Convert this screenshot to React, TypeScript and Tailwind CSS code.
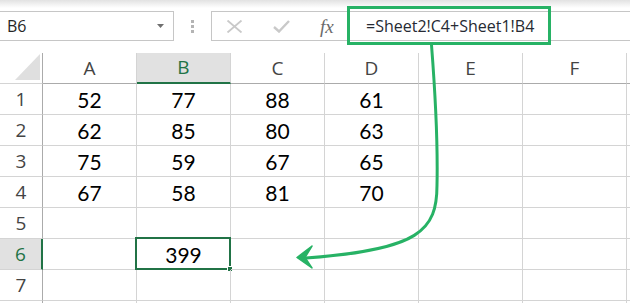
import React from "react";

const cols = [
  { key: "A", w: "w-[94px]" },
  { key: "B", w: "w-[94px]" },
  { key: "C", w: "w-[94px]" },
  { key: "D", w: "w-[94px]" },
  { key: "E", w: "w-[104px]" },
  { key: "F", w: "w-[104px]" },
];

const data: (number | null)[][] = [
  [52, 77, 88, 61],
  [62, 85, 80, 63],
  [75, 59, 67, 65],
  [67, 58, 81, 70],
  [],
  [null, 399],
  [],
];

function FormulaBar() {
  return (
    <div className="flex items-center mt-[3px] h-[30px]">
      <div className="w-[174px] h-full border border-l-0 border-[#c6c6c6] bg-white flex items-center justify-between pl-[7px] pr-[9px]">
        <span className="font-['Open_Sans',sans-serif] text-[16px] text-[#262626] leading-none">
          B6
        </span>
        <svg width="7" height="4" viewBox="0 0 7 4">
          <polygon points="0,0 7,0 3.5,4" fill="#6f6f6f" />
        </svg>
      </div>
      <div className="w-[37px] h-full flex flex-col items-center justify-center gap-[2px]">
        <div className="w-[3px] h-[3px] bg-[#b4b4b4]" />
        <div className="w-[3px] h-[3px] bg-[#b4b4b4]" />
        <div className="w-[3px] h-[3px] bg-[#b4b4b4]" />
      </div>
      <div className="flex-1 h-full border-y border-l border-[#c6c6c6] bg-white flex items-center">
        <div className="w-[135px] flex items-center pl-[14px] gap-[30px]">
          <svg width="17" height="13" viewBox="0 0 17 13">
            <path d="M1.5 0.5 L15.5 12.5 M15.5 0.5 L1.5 12.5" stroke="#c9c9c9" strokeWidth="1.8" fill="none" />
          </svg>
          <svg width="17" height="13" viewBox="0 0 17 13">
            <path d="M1 7 L6 11.5 L16 1" stroke="#c9c9c9" strokeWidth="2.4" fill="none" />
          </svg>
          <span className="font-['Liberation_Serif',serif] italic text-[19px] text-[#6a6a6a] leading-none">
            fx
          </span>
        </div>
        <span className="ml-[19px] font-['Open_Sans',sans-serif] text-[16px] text-[#262a33] leading-none">
          =Sheet2!C4+Sheet1!B4
        </span>
      </div>
    </div>
  );
}

function HeaderRow() {
  return (
    <div className="flex h-[31px]">
      <div className="w-[43px] h-full border-r border-b border-r-[#ababab] border-b-[#d4d4d4] flex items-end justify-end pr-[2px] pb-[3px]">
        <svg width="25" height="26" viewBox="0 0 25 26">
          <polygon points="25,0 25,26 0,26" fill="#dfdfdf" />
        </svg>
      </div>
      {cols.map((c) => {
        const sel = c.key === "B";
        return (
          <div
            key={c.key}
            className={
              sel
                ? `${c.w} h-full bg-[#e1e1e1] border-r border-r-[#d4d4d4] border-b-2 border-b-[#217346] flex items-center justify-center text-[#217346]`
                : `${c.w} h-full border-r border-r-[#d4d4d4] border-b border-b-[#ababab] flex items-center justify-center text-[#444444]`
            }
          >
            {c.key}
          </div>
        );
      })}
      <div className="flex-1 h-full border-b border-b-[#ababab]" />
    </div>
  );
}

function DataRow({ n, values }: { n: number; values: (number | null)[] }) {
  const selRow = n === 6;
  return (
    <div className="flex h-[31px]">
      <div
        className={
          selRow
            ? "w-[43px] h-full bg-[#e1e1e1] border-r-2 border-r-[#217346] border-b border-b-[#d4d4d4] flex items-center justify-center text-[#217346]"
            : "w-[43px] h-full border-r border-r-[#ababab] border-b border-b-[#d4d4d4] flex items-center justify-center text-[#444444]"
        }
      >
        {n}
      </div>
      {cols.map((c, i) => {
        const v = values[i];
        const active = selRow && c.key === "B";
        return (
          <div
            key={c.key}
            className={`${c.w} h-full relative border-r border-b border-[#d4d4d4] flex items-center justify-center font-['Lato',sans-serif] text-[21px] text-black`}
          >
            {v ?? ""}
            {active && (
              <div className="absolute -left-[2px] -top-[2px] -right-[1px] -bottom-[1px] border-2 border-[#217346]">
                <div className="absolute -right-[4px] -bottom-[4px] w-[6px] h-[6px] bg-[#217346] border border-white" />
              </div>
            )}
          </div>
        );
      })}
      <div className="flex-1 h-full border-b border-[#d4d4d4]" />
    </div>
  );
}

export default function App() {
  return (
    <div className="w-[630px] h-[303px] bg-white relative overflow-hidden">
      <div className="h-[8px] bg-gradient-to-b from-[#e2e2e2] to-white" />
      <FormulaBar />
      <div className="h-[12px]" />
      <div className="font-['Open_Sans',sans-serif] text-[19px] leading-none">
        <HeaderRow />
        {data.map((row, i) => (
          <DataRow key={`row-${i}`} n={i + 1} values={row} />
        ))}
        <div className="flex h-[4px]">
          <div className="w-[43px] border-r border-r-[#ababab]" />
          {cols.map((c) => (
            <div key={c.key} className={`${c.w} border-r border-[#d4d4d4]`} />
          ))}
        </div>
      </div>

      {/* annotation: green frame round the formula and the arrow to B6 */}
      <div className="absolute left-[347px] top-[6px] w-[204px] h-[39px] border-[3px] border-[#27b265] pointer-events-none" />
      <svg
        className="absolute left-0 top-0 pointer-events-none"
        width="630"
        height="303"
        viewBox="0 0 630 303"
      >
        <path
          d="M431.5 45 C435 90, 438 140, 437 185 C437 230, 420 250, 306 258"
          stroke="#27b265"
          strokeWidth="3"
          fill="none"
          strokeLinecap="round"
        />
        <path d="M297 257.5 L312 246 L305 257.5 L312 268 Z" fill="#27b265" stroke="#27b265" strokeWidth="1.5" strokeLinejoin="round" />
      </svg>
    </div>
  );
}
